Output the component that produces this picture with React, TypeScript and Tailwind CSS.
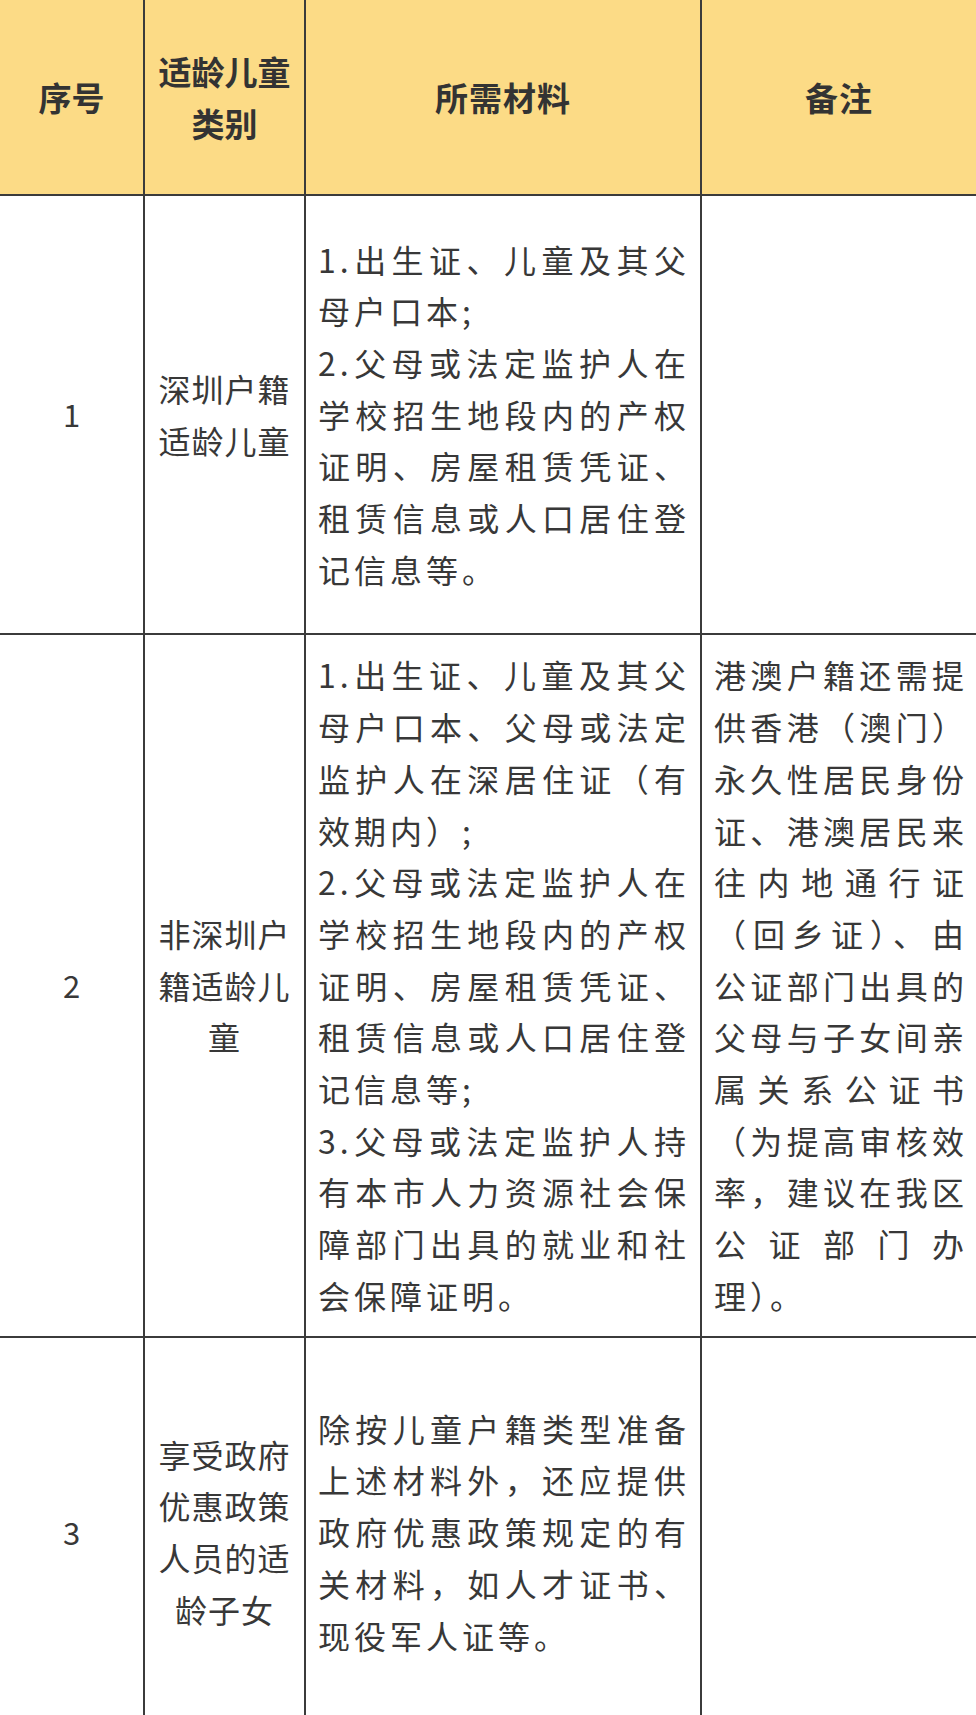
import React from 'react';

type Line = { t: string; j?: boolean };

const full = (t: string): Line => ({ t, j: true });
const last = (t: string): Line => ({ t });

const rows: { no: string; type: string[]; mat: Line[]; note: Line[] }[] = [
  {
    no: '1',
    type: ['深圳户籍', '适龄儿童'],
    mat: [
      full('1.出生证、儿童及其父'),
      last('母户口本;'),
      full('2.父母或法定监护人在'),
      full('学校招生地段内的产权'),
      full('证明、房屋租赁凭证、'),
      full('租赁信息或人口居住登'),
      last('记信息等。'),
    ],
    note: [],
  },
  {
    no: '2',
    type: ['非深圳户', '籍适龄儿', '童'],
    mat: [
      full('1.出生证、儿童及其父'),
      full('母户口本、父母或法定'),
      full('监护人在深居住证（有'),
      last('效期内）;'),
      full('2.父母或法定监护人在'),
      full('学校招生地段内的产权'),
      full('证明、房屋租赁凭证、'),
      full('租赁信息或人口居住登'),
      last('记信息等;'),
      full('3.父母或法定监护人持'),
      full('有本市人力资源社会保'),
      full('障部门出具的就业和社'),
      last('会保障证明。'),
    ],
    note: [
      full('港澳户籍还需提'),
      full('供香港（澳门）'),
      full('永久性居民身份'),
      full('证、港澳居民来'),
      full('往内地通行证'),
      full('（回乡证）、由'),
      full('公证部门出具的'),
      full('父母与子女间亲'),
      full('属关系公证书'),
      full('（为提高审核效'),
      full('率，建议在我区'),
      full('公证部门办'),
      last('理）。'),
    ],
  },
  {
    no: '3',
    type: ['享受政府', '优惠政策', '人员的适', '龄子女'],
    mat: [
      full('除按儿童户籍类型准备'),
      full('上述材料外，还应提供'),
      full('政府优惠政策规定的有'),
      full('关材料，如人才证书、'),
      last('现役军人证等。'),
    ],
    note: [],
  },
];

function Lines({ lines }: { lines: Line[] }) {
  return (
    <div className="w-full">
      {lines.map((l, i) => (
        <div
          key={i}
          className={l.j ? 'whitespace-nowrap [text-align-last:justify]' : 'whitespace-nowrap text-left'}
        >
          {l.t}
        </div>
      ))}
    </div>
  );
}

export default function App() {
  return (
    <div className="w-[976px] bg-white font-['Noto_Sans_CJK_SC','Noto_Sans',sans-serif]">
      <div className="grid grid-cols-[143px_159px_394px_274px] grid-rows-[194px_437px_701px_388px] gap-[2px] bg-[#3b3b3b]">
        {/* header */}
        <div className="bg-[#fcdb86] flex items-center justify-center text-[33px] font-bold text-[#333] leading-[52px]">
          序号
        </div>
        <div className="bg-[#fcdb86] flex flex-col items-center justify-center text-[33px] font-bold text-[#333] leading-[52px]">
          <div>适龄儿童</div>
          <div>类别</div>
        </div>
        <div className="bg-[#fcdb86] flex items-center justify-center text-[33px] font-bold text-[#333] leading-[52px] tracking-[1px]">
          所需材料
        </div>
        <div className="bg-[#fcdb86] flex items-center justify-center text-[33px] font-bold text-[#333] leading-[52px] tracking-[1px]">
          备注
        </div>

        {rows.map((r) => (
          <React.Fragment key={r.no}>
            <div className="bg-white flex items-center justify-center text-[31px] text-[#383838]">
              {r.no}
            </div>
            <div className="bg-white flex flex-col items-center justify-center text-[32px] leading-[51.7px] tracking-[1px] text-[#383838]">
              {r.type.map((t, i) => (
                <div key={i}>{t}</div>
              ))}
            </div>
            <div className="bg-white flex items-center pl-[12px] pr-[10px] text-[32px] leading-[51.7px] tracking-[4px] text-[#383838]">
              <Lines lines={r.mat} />
            </div>
            <div className="bg-white flex items-center pl-[12px] pr-[8px] text-[32px] leading-[51.7px] tracking-[4px] text-[#383838]">
              <Lines lines={r.note} />
            </div>
          </React.Fragment>
        ))}
      </div>
    </div>
  );
}
